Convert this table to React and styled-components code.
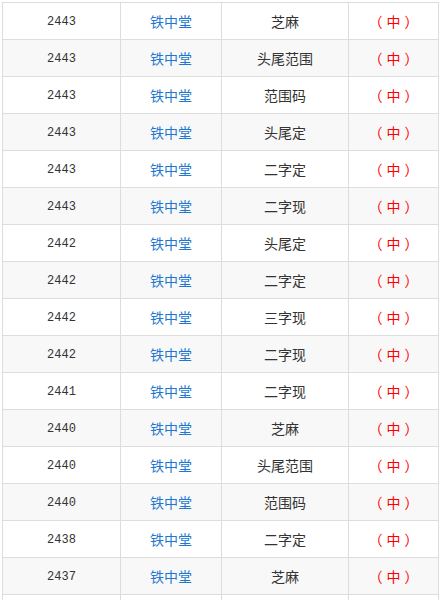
import React from 'react';
import styled, { createGlobalStyle } from 'styled-components';

const GlobalStyle = createGlobalStyle`
	body {
		margin: 0;
		background: #fff;
		font-family: "Noto Sans CJK SC", sans-serif;
	}
`;

const rows = [
	['2443', '芝麻'],
	['2443', '头尾范围'],
	['2443', '范围码'],
	['2443', '头尾定'],
	['2443', '二字定'],
	['2443', '二字现'],
	['2442', '头尾定'],
	['2442', '二字定'],
	['2442', '三字现'],
	['2442', '二字现'],
	['2441', '二字现'],
	['2440', '芝麻'],
	['2440', '头尾范围'],
	['2440', '范围码'],
	['2438', '二字定'],
	['2437', '芝麻'],
];

const Wrap = styled.div`
	padding: 2px 0 0 2px;
	height: 598px;
	overflow: hidden;
`;

const Table = styled.table`
	border-collapse: collapse;
	width: 436px;
	table-layout: fixed;
`;

const Col = styled.col`
	width: ${p => p.$w}px;
`;

const Row = styled.tr`
	height: 37px;
	background: ${p => (p.$odd ? '#f8f8f8' : '#fff')};
`;

const Cell = styled.td`
	border: 1px solid #dddddd;
	text-align: center;
	padding: 0;
	font-size: 14px;
	color: #333;
`;

const Num = styled(Cell)`
	font-family: "Liberation Mono", monospace;
	font-size: 12px;
	padding-top: 2px;
`;

const Name = styled(Cell)`
	color: #1e78d2;
`;

const Hit = styled(Cell)`
	color: #ff0000;
`;

// 括号与"中"之间留点空
const Paren = styled.span`
	margin: ${p => (p.$open ? '0 4px 0 0' : '0 0 0 4px')};
`;

export default function App() {
	return (
		<Wrap>
			<GlobalStyle />
			<Table>
				<colgroup>
					<Col $w={118} />
					<Col $w={101} />
					<Col $w={127} />
					<Col $w={90} />
				</colgroup>
				<tbody>
					{rows.map((r, i) => (
						<Row key={i} $odd={i % 2 === 1}>
							<Num>{r[0]}</Num>
							<Name>铁中堂</Name>
							<Cell>{r[1]}</Cell>
							<Hit>
								<Paren $open>（</Paren>中<Paren>）</Paren>
							</Hit>
						</Row>
					))}
					<Row>
						<Num />
						<Name />
						<Cell />
						<Hit />
					</Row>
				</tbody>
			</Table>
		</Wrap>
	);
}
